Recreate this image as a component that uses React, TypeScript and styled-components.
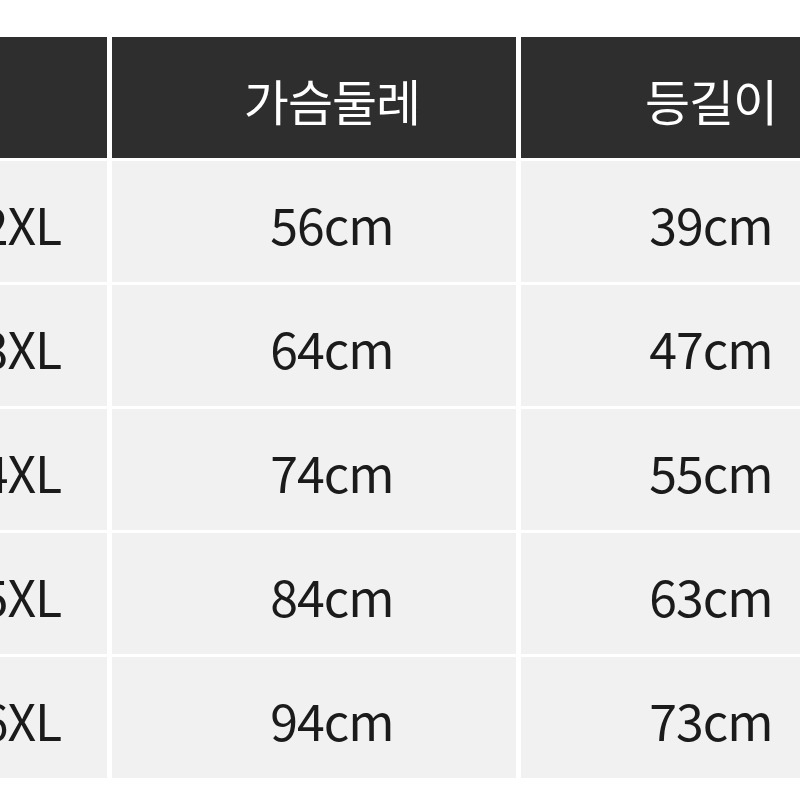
import React from "react";
import styled, { createGlobalStyle } from "styled-components";

const Global = createGlobalStyle`
  html, body { margin: 0; padding: 0; background: #ffffff; }
  body { width: 800px; height: 800px; overflow: hidden; }
  #root { width: 800px; height: 800px; }
`;

const Page = styled.div`
  width: 800px;
  height: 800px;
  overflow: hidden;
  background: #ffffff;
  padding-top: 37px;
  box-sizing: border-box;
`;

const Table = styled.div`
  display: grid;
  grid-template-columns: 172px 404px 380px;
  grid-auto-rows: 121px;
  column-gap: 5px;
  row-gap: 3px;
  margin-left: -65px;
  width: max-content;
  font-family: "Noto Sans CJK KR", "Noto Sans", sans-serif;
`;

const Cell = styled.div<{ $head?: boolean; $shift?: number }>`
  display: flex;
  align-items: center;
  justify-content: center;
  background: ${(p) => (p.$head ? "#2e2e2e" : "#f1f1f1")};
  color: ${(p) => (p.$head ? "#ffffff" : "#1b1b1b")};
  font-size: ${(p) => (p.$head ? "49px" : "50px")};
  font-weight: 400;
  letter-spacing: -1px;
  padding-left: ${(p) => (p.$shift ?? 0) * 2}px;
  padding-top: ${(p) => (p.$head ? "3px" : "2px")};
  box-sizing: border-box;
`;

const rows = [
  ["2XL", "56cm", "39cm"],
  ["3XL", "64cm", "47cm"],
  ["4XL", "74cm", "55cm"],
  ["5XL", "84cm", "63cm"],
  ["6XL", "94cm", "73cm"],
];

export default function App() {
  return (
    <>
      <Global />
      <Page>
        <Table>
          <Cell $head aria-label="사이즈" />
          <Cell $head $shift={18}>가슴둘레</Cell>
          <Cell $head>등길이</Cell>
          {rows.map((r) => (
            <React.Fragment key={r[0]}>
              <Cell>{r[0]}</Cell>
              <Cell $shift={18}>{r[1]}</Cell>
              <Cell>{r[2]}</Cell>
            </React.Fragment>
          ))}
        </Table>
      </Page>
    </>
  );
}
